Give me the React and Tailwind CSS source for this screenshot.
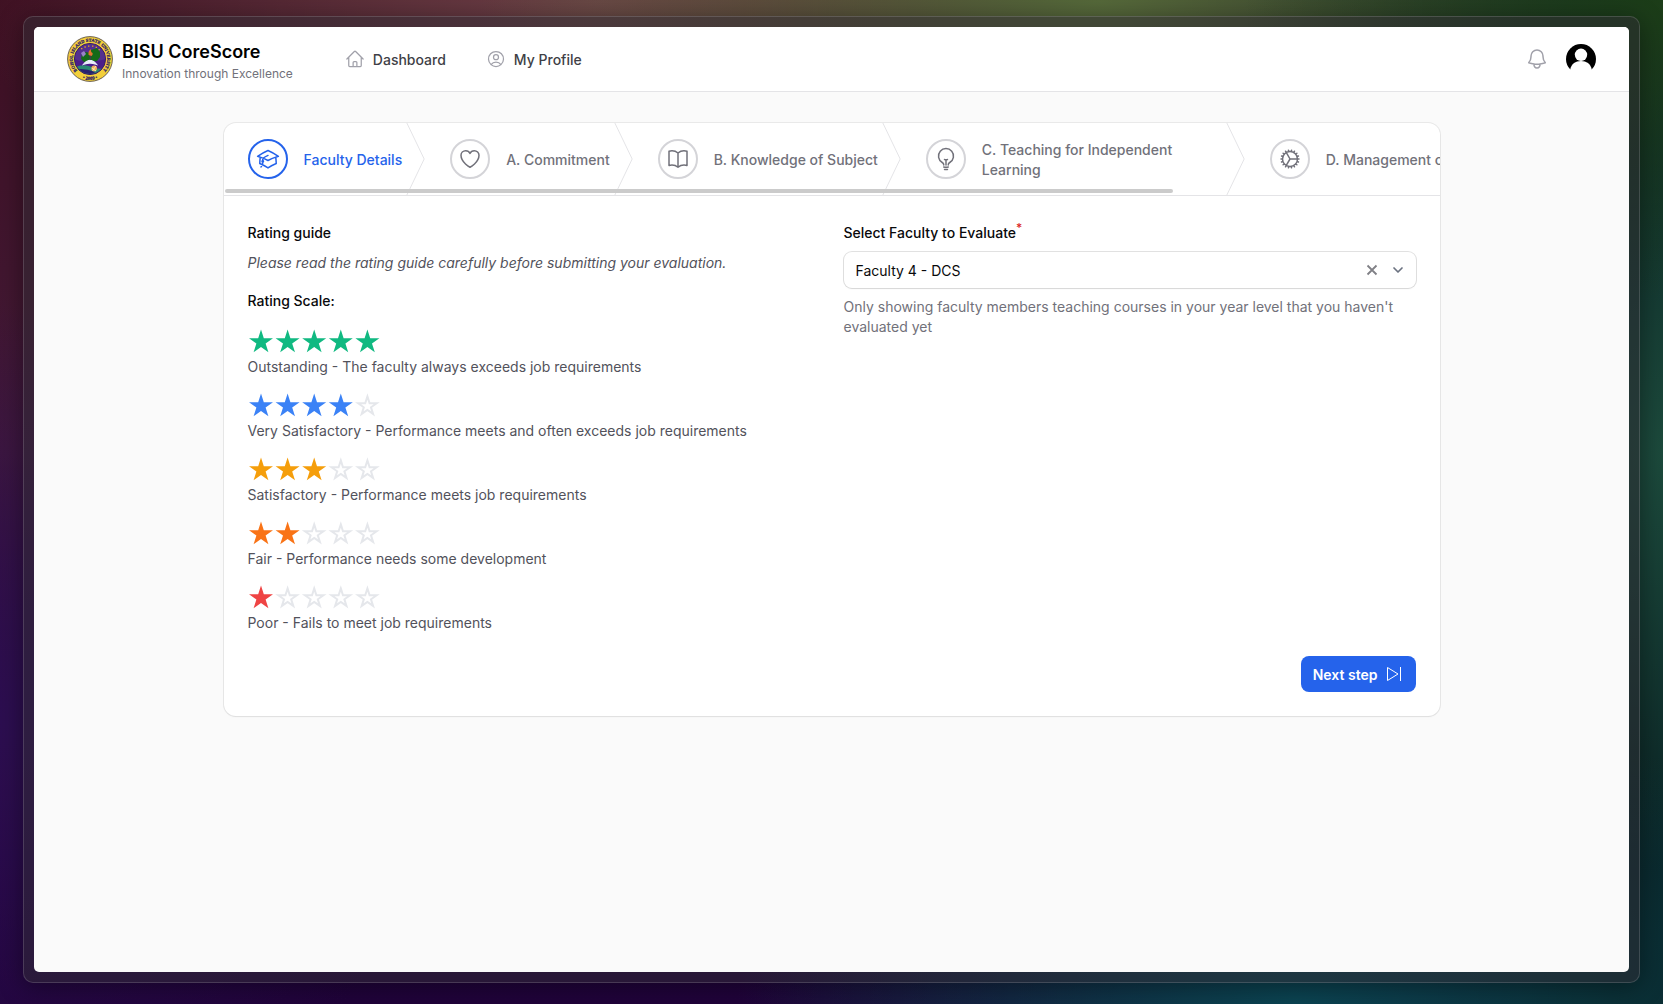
import React from "react";
import {
  HiOutlineHome,
  HiOutlineUserCircle,
  HiOutlineBell,
  HiOutlineAcademicCap,
  HiOutlineHeart,
  HiOutlineBookOpen,
  HiOutlineLightBulb,
  HiOutlineCog,
} from "react-icons/hi2";

const steps = [
  { label: "Faculty Details", Icon: HiOutlineAcademicCap, active: true },
  { label: "A. Commitment", Icon: HiOutlineHeart },
  { label: "B. Knowledge of Subject", Icon: HiOutlineBookOpen },
  { label: "C. Teaching for Independent Learning", Icon: HiOutlineLightBulb },
  { label: "D. Management of Learning", Icon: HiOutlineCog },
];

const ratings = [
  { stars: 5, color: "text-[#10b981]", text: "Outstanding - The faculty always exceeds job requirements" },
  { stars: 4, color: "text-[#3b82f6]", text: "Very Satisfactory - Performance meets and often exceeds job requirements" },
  { stars: 3, color: "text-[#f59e0b]", text: "Satisfactory - Performance meets job requirements" },
  { stars: 2, color: "text-[#f97316]", text: "Fair - Performance needs some development" },
  { stars: 1, color: "text-[#ef4444]", text: "Poor - Fails to meet job requirements" },
];

const STAR = "M13 0.5 L15.8 9.2 H25 L17.6 14.6 L20.4 23.2 L13 17.9 L5.6 23.2 L8.4 14.6 L1 9.2 H10.2 Z";
const HOLLOW_STAR = "M13 3.4 L15.2 10.2 H22.3 L16.6 14.3 L18.7 20.9 L13 16.9 L7.3 20.9 L9.4 14.3 L3.7 10.2 H10.8 Z";

function Stars({ count, color }) {
  return (
    <svg role="img" aria-label={`${count} of 5 stars`} viewBox="0 0 134 24" className={`block h-6 w-[134px] ${color}`}>
      {[0, 1, 2, 3, 4].map((i) =>
        i < count ? (
          <path key={i} d={STAR} transform={`translate(${i * 26.6} 0)`} fill="currentColor" />
        ) : (
          <path
            key={i}
            d={HOLLOW_STAR}
            transform={`translate(${i * 26.6} 0)`}
            fill="none"
            stroke="#e5e7eb"
            strokeWidth="2"
          />
        )
      )}
    </svg>
  );
}

function Seal() {
  return (
    <svg viewBox="0 0 48 48" className="size-12 flex-none" role="img" aria-label="Bohol Island State University seal">
      <defs>
        <path id="seal-ring" d="M12.9 37.2 A17.3 17.3 0 1 1 35.1 37.2" />
        <path id="seal-year" d="M12 41.2 A21 21 0 0 0 36 41.2" />
        <clipPath id="seal-core">
          <circle cx="24" cy="24" r="15" />
        </clipPath>
      </defs>
      <circle cx="24" cy="24" r="22.4" fill="#f3cf3a" stroke="#5b5148" strokeWidth="0.9" />
      <circle cx="24" cy="24" r="15.6" fill="#4b1d8a" stroke="#3a2260" strokeWidth="1" />
      <g clipPath="url(#seal-core)">
        <path d="M8 24 A16 16 0 0 1 40 24 L32 26 L24 22 L14 26 Z" fill="#54308f" />
        <path d="M15 24 L16 19 L20 17 L24 18 L25 15 L31 13 L34 17 L34 22 L31 26 L24 27 L18 27 Z" fill="#146a18" />
        <path d="M15 18 l3 -2 l2 3 l-3 3 Z" fill="#9a83c8" />
        <path d="M8 33 Q16 28 26 32 T41 31 V41 H8 Z" fill="#2b8a72" />
        <path d="M8 35 Q17 32 29 37 L24 41 H8 Z" fill="#29206f" />
        <path d="M18 29 Q24 22 30 29 Q24 27 18 29 Z" fill="#f7f8ff" stroke="#e8ecfa" strokeWidth="1.4" />
        <path d="M23.2 20 H25.4 L25 25 H23.6 Z" fill="#3c414c" />
        <path d="M22.6 20 Q21.8 16 25 14 Q24.4 17 26.6 18 Q27 20 25.6 21 Z" fill="#e5732d" />
        <circle cx="28.2" cy="33.4" r="2.8" fill="#f0b05a" />
        <path d="M26 33 L30 36 M30 31 L26.6 35.6" stroke="#fff1cf" strokeWidth="0.8" />
        <path d="M15 13.6h1.4M18.4 12h1.4M22 11.2h1.4M26 11.2h1.4M29.6 12.4h1.4M32.6 14.6h1.2" stroke="#e0a91f" strokeWidth="1.3" />
      </g>
      <text fontSize="4.5" fontWeight="700" fill="#2b1a66" stroke="#2b1a66" strokeWidth="0.25" fontFamily="'Liberation Serif', serif">
        <textPath href="#seal-ring" startOffset="50%" textAnchor="middle">BOHOL ISLAND STATE UNIVERSITY</textPath>
      </text>
      <text fontSize="4.8" fontWeight="700" fill="#2b1a66" stroke="#2b1a66" strokeWidth="0.25" fontFamily="'Liberation Serif', serif">
        <textPath href="#seal-year" startOffset="50%" textAnchor="middle">• 2009 •</textPath>
      </text>
    </svg>
  );
}

function Avatar() {
  return (
    <svg viewBox="0 0 32 32" className="size-8" aria-hidden="true">
      <circle cx="16" cy="16" r="15" fill="#000" />
      <circle cx="16" cy="11.8" r="6.2" fill="#fff" />
      <path d="M5.2 26.4 C6.4 20.8 10.6 18 16 18 S25.6 20.8 26.8 26.4 L26 32 H6 Z" fill="#fff" />
    </svg>
  );
}

function Topbar() {
  return (
    <header className="flex h-[65px] items-center border-b border-[#e4e4e7] bg-white px-8">
      <a href="#home" className="flex items-center gap-2">
        <Seal />
        <span className="pt-1.5">
          <span className="block text-lg leading-6 font-semibold text-black">BISU CoreScore</span>
          <span className="block text-xs leading-5 text-[#71717a]">Innovation through Excellence</span>
        </span>
      </a>
      <nav className="ml-[52px] flex items-center gap-10 text-sm font-medium text-[#3f3f46]">
        <a href="#dashboard" className="flex items-center gap-2">
          <HiOutlineHome className="size-5 text-[#a1a1aa]" />
          <span className="pt-0.5">Dashboard</span>
        </a>
        <a href="#profile" className="flex items-center gap-2">
          <HiOutlineUserCircle className="size-5 text-[#a1a1aa]" />
          <span className="pt-0.5">My Profile</span>
        </a>
      </nav>
      <div className="ml-auto flex items-center gap-4">
        <button type="button" aria-label="Notifications">
          <HiOutlineBell className="size-6 text-[#a1a1aa]" />
        </button>
        <button type="button" aria-label="Account">
          <Avatar />
        </button>
      </div>
    </header>
  );
}

function StepBar() {
  return (
    <div className="relative border-b border-[#e4e4e7]">
      <ol className="flex overflow-hidden">
        {steps.map(({ label, Icon, active }, i) => (
          <li key={label} className="relative flex h-[72px] flex-none items-center">
            <button type="button" className="flex items-center gap-4 px-6 text-left">
              <span
                className={
                  active
                    ? "flex size-10 flex-none items-center justify-center rounded-full border-2 border-[#2563eb] text-[#2563eb]"
                    : "flex size-10 flex-none items-center justify-center rounded-full border-2 border-[#d4d4d8] text-[#71717a]"
                }
              >
                <Icon className="size-6" />
              </span>
              <span
                className={
                  active
                    ? "max-w-60 pt-0.5 text-sm font-medium text-[#2563eb]"
                    : "max-w-60 pt-0.5 text-sm font-medium text-[#71717a]"
                }
              >
                {label}
              </span>
            </button>
            {i < steps.length - 1 && (
              <svg
                viewBox="0 0 22 80"
                fill="none"
                preserveAspectRatio="none"
                aria-hidden="true"
                className="absolute top-0 right-0 h-full w-5 text-[#e4e4e7]"
              >
                <path d="M0 -2L20 40L0 82" stroke="currentColor" strokeLinejoin="round" vectorEffect="non-scaling-stroke" />
              </svg>
            )}
          </li>
        ))}
      </ol>
      <div className="absolute bottom-0.5 left-px h-1 w-[78%] rounded-full bg-[#cbcbcb]" />
    </div>
  );
}

function RatingGuide() {
  return (
    <section>
      <h2 className="text-sm leading-6 font-medium text-[#09090b]">Rating guide</h2>
      <p className="mt-2 text-sm text-[#52525b] italic">Please read the rating guide carefully before submitting your evaluation.</p>
      <h3 className="mt-4 text-sm leading-6 font-medium text-[#09090b]">Rating Scale:</h3>
      <ul className="mt-4 flex flex-col gap-4">
        {ratings.map((r) => (
          <li key={r.text}>
            <Stars count={r.stars} color={r.color} />
            <p className="mt-1 text-sm text-[#52525b]">{r.text}</p>
          </li>
        ))}
      </ul>
    </section>
  );
}

function FacultyField() {
  return (
    <section>
      <label htmlFor="faculty" className="block text-sm leading-6 font-medium text-[#09090b]">
        Select Faculty to Evaluate
        <sup className="text-xs font-medium text-[#dc2626]">*</sup>
      </label>
      <div className="mt-[7px] flex h-9 items-center rounded-lg bg-white pr-2 pl-3 shadow-[0_0_0_1px_rgba(9,9,11,0.12),0_1px_2px_rgba(0,0,0,0.05)]">
        <select id="faculty" className="flex-1 appearance-none bg-transparent pt-0.5 text-sm text-[#09090b] outline-none" defaultValue="4">
          <option value="4">Faculty 4 - DCS</option>
        </select>
        <button type="button" aria-label="Clear selection" className="text-[#808086]">
          <svg viewBox="0 0 12 12" className="size-3" fill="none" stroke="currentColor" strokeWidth="1.8">
            <path d="M1.5 1.5 L10.5 10.5 M10.5 1.5 L1.5 10.5" />
          </svg>
        </button>
        <svg viewBox="0 0 20 20" className="ml-2.5 size-5 text-[#6b7280]" fill="none" stroke="currentColor" strokeWidth="1.7" aria-hidden="true">
          <path d="M6 8l4 4 4-4" strokeLinecap="round" strokeLinejoin="round" />
        </svg>
      </div>
      <p className="mt-[9px] text-sm text-[#71717a]">
        Only showing faculty members teaching courses in your year level that you haven't evaluated yet
      </p>
    </section>
  );
}

export default function App() {
  return (
    <div
      className="min-h-screen px-[23px] pt-4 pb-[21px] font-['Inter',sans-serif] bg-[radial-gradient(ellipse_420px_300px_at_100%_0%,#1c3d18_0%,transparent_100%),radial-gradient(ellipse_620px_300px_at_66%_0%,#55693a_0%,transparent_100%),radial-gradient(ellipse_620px_300px_at_36%_0%,#6d4147_0%,transparent_100%),radial-gradient(ellipse_560px_320px_at_78%_100%,#0b4452_0%,transparent_100%),radial-gradient(ellipse_260px_420px_at_100%_45%,#1c4a3c_0%,transparent_100%),radial-gradient(ellipse_460px_420px_at_0%_72%,#2c0e50_0%,transparent_100%),linear-gradient(to_right,transparent_0%,transparent_45%,#0a2224_95%),linear-gradient(to_bottom,#3e1022_0%,#431a38_45%,#23043f_85%,#20033a_100%)]"
    >
      <div className="rounded-[10px] border border-white/15 bg-[#302c34]/50 p-2.5 shadow-[0_4px_24px_rgba(0,0,0,0.4)]">
        <div className="min-h-[calc(100vh-59px)] overflow-hidden rounded-[5px] bg-[#fafafa]">
          <Topbar />
          <main className="mx-auto max-w-7xl px-8 pt-[31px] pb-8">
            <form
              className="overflow-hidden rounded-xl bg-white shadow-[0_0_0_1px_rgba(9,9,11,0.07),0_1px_2px_rgba(0,0,0,0.05)]"
              onSubmit={(e) => e.preventDefault()}
            >
              <StepBar />
              <div className="px-6 pt-[25px] pb-6">
                <div className="grid grid-cols-2 gap-6">
                  <RatingGuide />
                  <FacultyField />
                </div>
                <div className="mt-[23px] flex justify-end">
                  <button
                    type="submit"
                    className="flex h-9 items-center gap-2 rounded-lg bg-[#2563eb] px-3 text-sm font-semibold text-white"
                  >
                    <span className="pt-0.5">Next step</span>
                    <svg viewBox="0 0 18 18" className="size-[18px]" fill="none" stroke="currentColor" strokeWidth="1" aria-hidden="true">
                      <path d="M1.5 2.5 V15.5 L12 9 Z M14.5 2 V16" />
                    </svg>
                  </button>
                </div>
              </div>
            </form>
          </main>
        </div>
      </div>
    </div>
  );
}
